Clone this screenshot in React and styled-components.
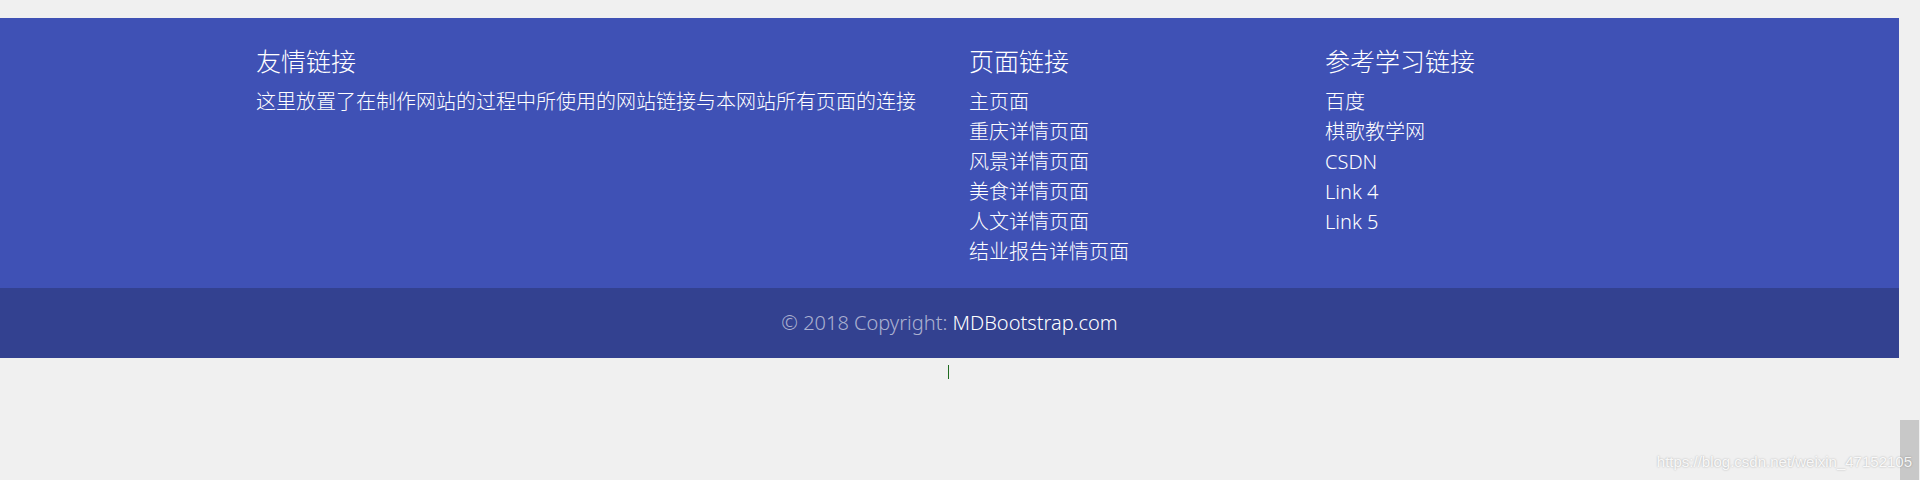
import styled, { createGlobalStyle } from 'styled-components'

const GlobalStyle = createGlobalStyle`
  html, body {
    margin: 0;
    padding: 0;
    background: #f0f0f0;
    overflow: hidden;
  }
  body {
    font-family: "Noto Sans", "Noto Sans CJK SC", sans-serif;
  }
`

const pageLinks = ['主页面', '重庆详情页面', '风景详情页面', '美食详情页面', '人文详情页面', '结业报告详情页面']
const studyLinks = ['百度', '棋歌教学网', 'CSDN', 'Link 4', 'Link 5']

const Screen = styled.div`
  position: relative;
  display: flex;
  width: 1920px;
  height: 480px;
  overflow: hidden;
`

const Page = styled.div`
  flex: 1;
  padding-top: 18px;
  display: flex;
  flex-direction: column;
`

const Footer = styled.footer`
  background: #3f51b5;
  color: #fff;
`

const FooterMain = styled.div`
  display: grid;
  grid-template-columns: 713px 356px 356px;
  padding: 28px 0 21px 256px;
`

const Column = styled.div`
  display: flex;
  flex-direction: column;
`

const Heading = styled.h5`
  margin: 0 0 12px;
  font-family: "Noto Sans CJK SC", sans-serif;
  font-size: 25px;
  font-weight: 300;
  line-height: 29px;
`

const Text = styled.p`
  margin: 0;
  font-family: "Noto Sans", "Noto Sans CJK SC", sans-serif;
  font-size: 20px;
  font-weight: 300;
  line-height: 30px;
  white-space: nowrap;
`

const LinkList = styled.ul`
  list-style: none;
  margin: 0;
  padding: 0;
`

const LinkItem = styled.li`
  font-family: "Noto Sans", "Noto Sans CJK SC", sans-serif;
  font-size: 20px;
  font-weight: 300;
  line-height: 30px;
  white-space: nowrap;
`

const Copyright = styled.div`
  background: #334190;
  height: 70px;
  line-height: 70px;
  text-align: center;
  font-family: "Noto Sans", sans-serif;
  font-size: 20px;
  font-weight: 300;
  color: rgba(255, 255, 255, 0.6);
`

const Brand = styled.span`
  color: #fff;
`

const Below = styled.div`
  display: flex;
  justify-content: center;
  padding-top: 7px;
`

const Caret = styled.div`
  width: 1px;
  height: 14px;
  margin-left: -2px;
  background: #1f6b1f;
`

const ScrollTrack = styled.div`
  width: 21px;
  background: #f0f0f0;
  display: flex;
  flex-direction: column;
  justify-content: flex-end;
`

const ScrollThumb = styled.div`
  height: 60px;
  margin: 0 1px;
  background: #c8c8c8;
`

const Watermark = styled.div`
  position: absolute;
  right: 8px;
  bottom: 10px;
  font-family: "Liberation Sans", Arial, sans-serif;
  font-size: 15px;
  color: rgba(255, 255, 255, 0.9);
  text-shadow: 0 0 2px rgba(0, 0, 0, 0.3);
`

export default function App() {
  return (
    <Screen>
      <GlobalStyle />
      <Page>
        <Footer>
          <FooterMain>
            <Column>
              <Heading>友情链接</Heading>
              <Text>这里放置了在制作网站的过程中所使用的网站链接与本网站所有页面的连接</Text>
            </Column>
            <Column>
              <Heading>页面链接</Heading>
              <LinkList>
                {pageLinks.map((l) => (
                  <LinkItem key={l}>{l}</LinkItem>
                ))}
              </LinkList>
            </Column>
            <Column>
              <Heading>参考学习链接</Heading>
              <LinkList>
                {studyLinks.map((l) => (
                  <LinkItem key={l}>{l}</LinkItem>
                ))}
              </LinkList>
            </Column>
          </FooterMain>
          <Copyright>
            © 2018 Copyright: <Brand>MDBootstrap.com</Brand>
          </Copyright>
        </Footer>
        <Below>
          <Caret />
        </Below>
      </Page>
      <ScrollTrack>
        <ScrollThumb />
      </ScrollTrack>
      <Watermark>https://blog.csdn.net/weixin_47152105</Watermark>
    </Screen>
  )
}
